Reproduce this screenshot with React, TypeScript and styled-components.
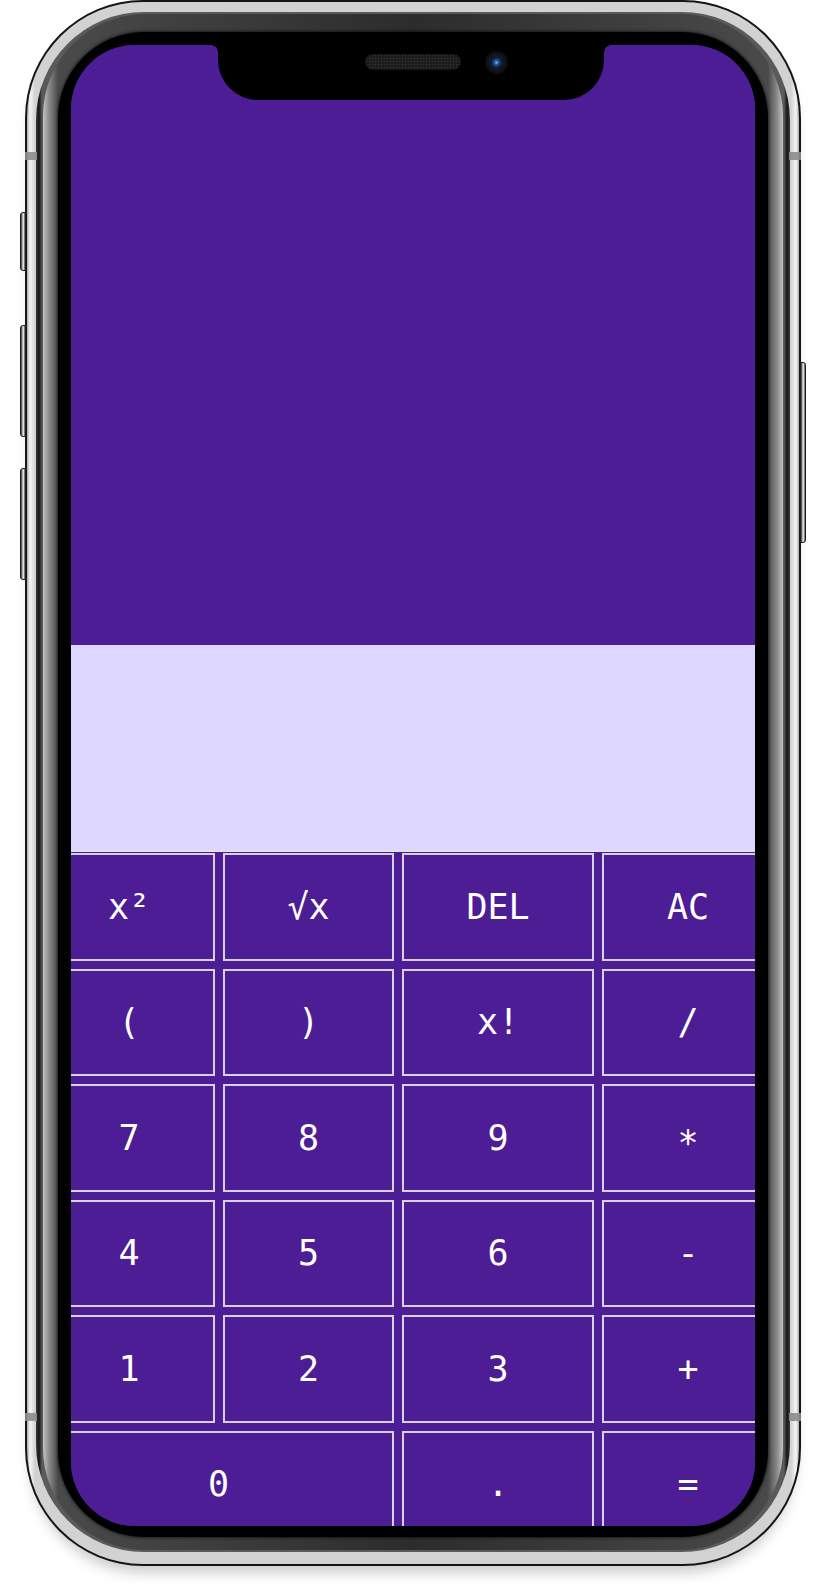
import React from "react";
import styled, { createGlobalStyle } from "styled-components";

const GlobalStyle = createGlobalStyle`
  html, body {
    margin: 0;
    padding: 0;
    background: #ffffff;
  }
  body {
    font-family: "DejaVu Sans Mono", "Liberation Mono", monospace;
  }
  * { box-sizing: border-box; }
`;

const Page = styled.div`
  width: 818px;
  height: 1594px;
  padding: 0 17px 0 25px;
  background: #ffffff;
  overflow: hidden;
`;

const Shell = styled.div`
  position: relative;
  width: 776px;
  height: 1566px;
  padding: 2px;
  border-radius: 118px;
  background: #151515;
  box-shadow: 0 12px 14px -6px rgba(0, 0, 0, 0.22);
  display: flex;
`;

const SilverRing = styled.div`
  flex: 1;
  display: flex;
  padding: 10px 9px 12px;
  border-radius: 116px;
  background:
    linear-gradient(90deg, #a9a9a9 0px, #f6f6f6 3px, #d2d2d2 8px, #d2d2d2 calc(100% - 8px), #f6f6f6 calc(100% - 3px), #a9a9a9 100%);
`;

const DarkRing = styled.div`
  flex: 1;
  display: flex;
  padding: 2px 7px 2px;
  border-radius: 108px;
  background: linear-gradient(90deg, #3a3a3a 0px, #161616 3px, #5a5a5a 6px, #5a5a5a calc(100% - 6px), #161616 calc(100% - 3px), #3a3a3a 100%);
`;

const GreyRing = styled.div`
  flex: 1;
  display: flex;
  padding: 18px 15px 13px;
  border-radius: 102px;
  background:
    linear-gradient(90deg, #c4c4c4 0px, #8a8a8a 6px, #4a4a4a 15px, #2c2c2c 50%, #4a4a4a calc(100% - 15px), #8a8a8a calc(100% - 6px), #c4c4c4 100%);
`;

const Bezel = styled.div`
  flex: 1;
  display: flex;
  padding: 13px 13px 11px;
  border-radius: 86px;
  background: #000000;
  box-shadow: 0 0 3px 1px rgba(0, 0, 0, 0.55);
`;

const Screen = styled.div`
  position: relative;
  flex: 1;
  display: flex;
  flex-direction: column;
  border-radius: 64px;
  overflow: hidden;
  background: #4c1d95;
`;

const SideKey = styled.div<{ $side: "left" | "right"; $top: number; $height: number }>`
  position: absolute;
  ${(p) => (p.$side === "left" ? "left: -5px;" : "right: -5px;")}
  top: ${(p) => p.$top}px;
  width: 6px;
  height: ${(p) => p.$height}px;
  border-radius: ${(p) => (p.$side === "left" ? "3px 0 0 3px" : "0 3px 3px 0")};
  background: linear-gradient(90deg, #2a2a2a, #bdbdbd 40%, #e8e8e8 60%, #4a4a4a);
  border: 1px solid #1c1c1c;
`;

const AntennaBand = styled.div<{ $side: "left" | "right"; $top: number }>`
  position: absolute;
  ${(p) => (p.$side === "left" ? "left: 0;" : "right: 0;")}
  top: ${(p) => p.$top}px;
  width: 12px;
  height: 8px;
  background: rgba(140, 140, 140, 0.9);
`;

const Notch = styled.div`
  position: absolute;
  top: 0;
  left: 147px;
  width: 386px;
  height: 55px;
  background: #000000;
  border-radius: 0 0 40px 40px;
  display: flex;
  align-items: center;
  padding: 0 0 22px 147px;
  gap: 24px;

  &::before,
  &::after {
    content: "";
    position: absolute;
    top: 0;
    width: 7px;
    height: 7px;
  }
  &::before {
    left: -7px;
    background: radial-gradient(circle at 0 100%, transparent 6.5px, #000 7px);
  }
  &::after {
    right: -7px;
    background: radial-gradient(circle at 100% 100%, transparent 6.5px, #000 7px);
  }
`;

const Speaker = styled.div`
  width: 96px;
  height: 16px;
  border-radius: 8px;
  background-color: #1d1d1d;
  background-image: radial-gradient(circle, #3a3a3a 0.8px, transparent 1px);
  background-size: 3px 3px;
  box-shadow: inset 0 0 2px #000;
`;

const Camera = styled.div`
  width: 23px;
  height: 23px;
  margin-top: 2px;
  border-radius: 50%;
  background: radial-gradient(circle, #2d6bc0 0, #1d4a8a 3px, #0d1d33 5px, #141821 7px, #0b0b0b 11.5px);
  display: flex;
  align-items: center;
  justify-content: center;
`;

const CameraGlint = styled.div`
  width: 3px;
  height: 3px;
  border-radius: 50%;
  background: #5b9ae0;
`;

const DisplayArea = styled.div`
  flex: 0 0 600px;
  background: #4c1d95;
`;

const ResultArea = styled.div`
  flex: 0 0 207px;
  background: #ddd6fe;
  border-bottom: 2px solid #e2e0e6;
`;

const Keypad = styled.div`
  margin: 0 -19px 0 -28px;
  padding-top: 1px;
  display: grid;
  grid-template-columns: 172px 171px 1fr 172px;
  grid-auto-rows: 107.5px;
  column-gap: 8px;
  row-gap: 8px;
  background: #4c1d95;
`;

const Key = styled.button<{ $span?: number }>`
  grid-column: span ${(p) => p.$span ?? 1};
  margin: 0;
  padding: 0;
  background: transparent;
  border: 2px solid #d6d0e1;
  color: #ffffff;
  font-family: "DejaVu Sans Mono", "Liberation Mono", monospace;
  font-size: 35px;
  font-weight: 400;
  display: flex;
  align-items: center;
  justify-content: center;
  cursor: pointer;
`;

const KeyLabel = styled.span<{ $drop?: number }>`
  display: block;
  transform: translateY(${(p) => p.$drop ?? 0}px);
`;

const keys: { label: string; span?: number; drop?: number }[] = [
  { label: "x²" },
  { label: "√x" },
  { label: "DEL" },
  { label: "AC" },
  { label: "(" },
  { label: ")" },
  { label: "x!" },
  { label: "/" },
  { label: "7" },
  { label: "8" },
  { label: "9" },
  { label: "*", drop: 5 },
  { label: "4" },
  { label: "5" },
  { label: "6" },
  { label: "-" },
  { label: "1" },
  { label: "2" },
  { label: "3" },
  { label: "+" },
  { label: "0", span: 2 },
  { label: "." },
  { label: "=" },
];

export default function App() {
  return (
    <>
      <GlobalStyle />
      <Page>
        <Shell>
          <SideKey $side="left" $top={212} $height={59} />
          <SideKey $side="left" $top={325} $height={112} />
          <SideKey $side="left" $top={468} $height={112} />
          <SideKey $side="right" $top={362} $height={181} />
          <SilverRing>
            <DarkRing>
              <GreyRing>
                <Bezel>
                  <Screen>
                    <DisplayArea />
                    <ResultArea />
                    <Keypad>
                      {keys.map((k) => (
                        <Key key={k.label} $span={k.span}>
                          <KeyLabel $drop={k.drop}>{k.label}</KeyLabel>
                        </Key>
                      ))}
                    </Keypad>
                    <Notch>
                      <Speaker />
                      <Camera>
                        <CameraGlint />
                      </Camera>
                    </Notch>
                  </Screen>
                </Bezel>
              </GreyRing>
            </DarkRing>
          </SilverRing>
          <AntennaBand $side="left" $top={152} />
          <AntennaBand $side="right" $top={152} />
          <AntennaBand $side="left" $top={1413} />
          <AntennaBand $side="right" $top={1413} />
        </Shell>
      </Page>
    </>
  );
}
